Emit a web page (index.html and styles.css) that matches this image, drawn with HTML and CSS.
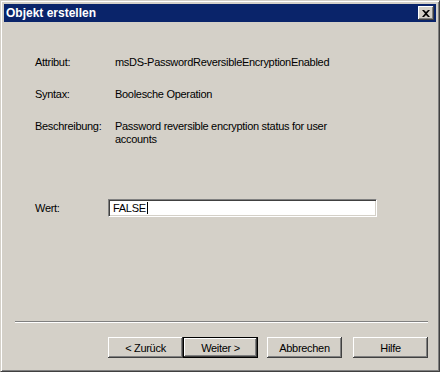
FILE: index.html
```html
<!DOCTYPE html>
<html lang="de">
  <head>
    <meta charset="UTF-8" />
    <title>Objekt erstellen</title>
    <link rel="stylesheet" href="styles.css">
  </head>
  <body>
    <div class="window">
      <div class="title-bar">
        <span class="title-text">Objekt erstellen</span>
        <button class="close-btn" type="button">
          <svg width="8" height="7" viewBox="0 0 8 7">
            <path d="M0 0h2l2 2 2-2h2L5 3.5 8 7H6L4 5 2 7H0l3-3.5z" fill="#000" />
          </svg>
        </button>
      </div>

      <div class="content">
        <div class="info-row">
          <span class="label">Attribut:</span>
          <span class="value">msDS-PasswordReversibleEncryptionEnabled</span>
        </div>
        <div class="info-row">
          <span class="label">Syntax:</span>
          <span class="value">Boolesche Operation</span>
        </div>
        <div class="info-row">
          <span class="label">Beschreibung:</span>
          <span class="value">Password reversible encryption status for user<br />accounts</span>
        </div>

        <div class="value-row">
          <span class="value-label">Wert:</span>
          <div class="text-input"><span class="caret">FALSE</span></div>
        </div>
      </div>

      <!-- Wizard-Leiste unten -->
      <div class="separator"></div>
      <div class="button-bar">
        <button class="btn" type="button">&lt; Zurück</button>
        <button class="btn btn-default" type="button">Weiter &gt;</button>
        <button class="btn btn-gap" type="button">Abbrechen</button>
        <button class="btn btn-gap" type="button">Hilfe</button>
      </div>
    </div>
  </body>
</html>
```

FILE: styles.css
```css
html,
body {
  margin: 0;
  padding: 0;
  background: #d4d0c8;
}

body {
  font-family: Tahoma, "Liberation Sans", Arial, sans-serif;
  font-size: 11px;
  letter-spacing: -0.3px;
  color: #000;
}

.window {
  width: 440px;
  height: 372px;
  box-sizing: border-box;
  background: #d4d0c8;
  border-top: 1px solid #d4d0c8;
  border-left: 1px solid #d4d0c8;
  border-right: 1px solid #404040;
  border-bottom: 1px solid #404040;
  box-shadow: inset 1px 1px #fff, inset -1px -1px #808080;
  padding: 3px;
  display: flex;
  flex-direction: column;
}

.title-bar {
  height: 18px;
  background: #0a246a;
  display: flex;
  align-items: center;
  justify-content: space-between;
  padding: 0 2px 0 2px;
}

.title-text {
  color: #fff;
  font-weight: 700;
  font-size: 12px;
  letter-spacing: 0;
}

.close-btn {
  width: 16px;
  height: 14px;
  padding: 0;
  margin: 0;
  background: #d4d0c8;
  border: none;
  box-shadow: inset -1px -1px #404040, inset 1px 1px #fff, inset -2px -2px #808080;
  display: flex;
  align-items: center;
  justify-content: center;
}

.content {
  padding: 34px 0 0 31px;
}

.info-row {
  display: flex;
  line-height: 13px;
  margin-bottom: 19px;
}

.label {
  width: 80px;
  flex-shrink: 0;
}

.value-row {
  display: flex;
  align-items: center;
  margin-top: 53px;
}

.value-label {
  width: 73px;
  flex-shrink: 0;
}

.text-input {
  width: 269px;
  height: 18px;
  box-sizing: border-box;
  background: #fff;
  border-top: 1px solid #808080;
  border-left: 1px solid #808080;
  border-right: 1px solid #fff;
  border-bottom: 1px solid #fff;
  box-shadow: inset 1px 1px #404040, inset -1px -1px #d4d0c8;
  padding: 2px 0 0 4px;
  line-height: 13px;
}

.caret {
  border-right: 1px solid #000;
  padding-right: 1px;
}

.separator {
  margin: auto 8px 0 11px;
  height: 1px;
  background: #808080;
  border-bottom: 1px solid #fff;
}

.button-bar {
  display: flex;
  padding: 14px 0 10px 104px;
}

.btn {
  width: 75px;
  height: 21px;
  margin: 0;
  padding: 0;
  font-family: inherit;
  font-size: 11px;
  letter-spacing: inherit;
  color: #000;
  background: #d4d0c8;
  border: none;
  box-shadow: inset -1px -1px #404040, inset 1px 1px #fff, inset -2px -2px #808080;
}

.btn-default {
  box-shadow: inset 0 0 0 1px #000, inset -2px -2px #404040, inset 2px 2px #fff, inset -3px -3px #808080;
}

.btn-gap {
  margin-left: 9px;
}

.btn-gap + .btn-gap {
  margin-left: 11px;
}
```
